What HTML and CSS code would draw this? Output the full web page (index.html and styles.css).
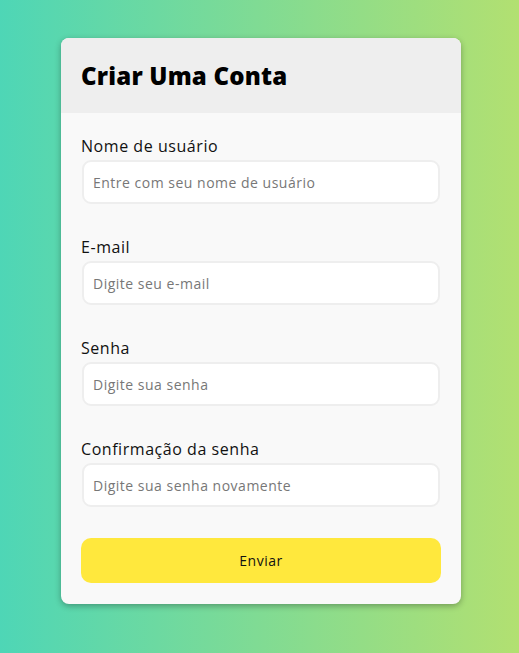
FILE: index.html
```html
<!DOCTYPE html>
<html lang="pt-BR">
<head>
<meta charset="utf-8">
<title>Criar Uma Conta</title>
<link rel="stylesheet" href="styles.css">
</head>
<body>
<main class="card">
  <header class="card-header">
    <h1 class="title">Criar Uma Conta</h1>
  </header>
  <form class="card-body">
    <div class="field">
      <label class="label" for="user">Nome de usuário</label>
      <input class="input" id="user" type="text" placeholder="Entre com seu nome de usuário">
    </div>
    <div class="field">
      <label class="label" for="email">E-mail</label>
      <input class="input" id="email" type="email" placeholder="Digite seu e-mail">
    </div>
    <div class="field">
      <label class="label" for="pass">Senha</label>
      <input class="input" id="pass" type="password" placeholder="Digite sua senha">
    </div>
    <div class="field">
      <label class="label" for="pass2">Confirmação da senha</label>
      <input class="input" id="pass2" type="password" placeholder="Digite sua senha novamente">
    </div>
    <button class="button" type="button">Enviar</button>
  </form>
</main>
</body>
</html>
```
FILE: styles.css
```css
* { box-sizing: border-box; }
html, body { height: 100%; }
body {
  margin: 0;
  background: linear-gradient(to right, #4ed6b6, #b2e071);
  font-family: "Open Sans", "Noto Sans", sans-serif;
  padding: 38px 0 0 61px;
}
.card {
  width: 400px;
  background: #f9f9f9;
  border-radius: 8px;
  box-shadow: 0 2px 6px rgba(0,0,0,0.3);
  overflow: hidden;
}
.card-header {
  height: 75px;
  background: #eeeeee;
  display: flex;
  align-items: center;
  padding: 0 20px;
}
.title {
  margin: 0;
  font-size: 24px;
  font-weight: 800;
  color: #000;
  letter-spacing: 0.2px;
}
.card-body {
  display: flex;
  flex-direction: column;
  gap: 31px;
  padding: 21px 20px 21px 20px;
}
.field {
  display: flex;
  flex-direction: column;
  gap: 2px;
}
.label {
  font-size: 16px;
  line-height: 24px;
  color: #111;
  letter-spacing: 0.55px;
}
.input {
  height: 44px;
  margin-left: 1px;
  margin-right: 1px;
  border: 2px solid #eeeeee;
  border-radius: 9px;
  background: #fff;
  padding: 0 9px;
  font-family: inherit;
  font-size: 14px;
  outline: none;
}
.input::placeholder { color: #777; letter-spacing: 0.5px; }
.button {
  height: 45px;
  border: none;
  border-radius: 10px;
  background: #ffe83d;
  font-family: inherit;
  font-size: 14px;
  color: #111;
  letter-spacing: 0.5px;
}
```
